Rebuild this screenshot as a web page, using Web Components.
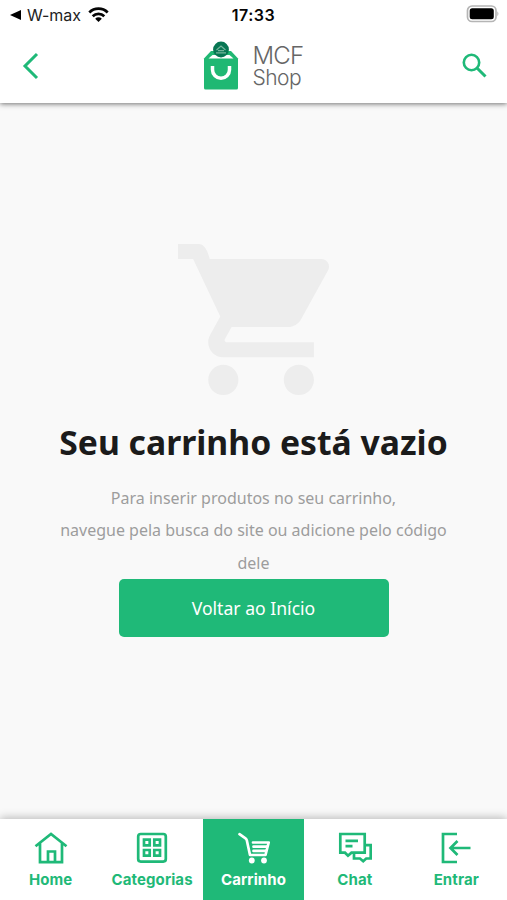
<!DOCTYPE html>
<html lang="pt-BR">
<head>
<meta charset="utf-8">
<title>MCF Shop</title>
<style>
    body {
        margin: 0;
        background: #f9f9f9;
        --shop-green: #1fb978;
        --shop-bg: #f9f9f9;
        --shop-title: #1b1b1b;
        --shop-muted: #9d9d9d;
    }
</style>
</head>
<body>
<shop-app>
    <status-bar slot="top" app="W-max" time="17:33"></status-bar>
    <shop-header slot="top"></shop-header>
    <empty-cart>
        <span slot="title">Seu carrinho está vazio</span>
        <span slot="text">Para inserir produtos no seu carrinho,<br>navegue pela busca do site ou adicione pelo código<br>dele</span>
        <span slot="action">Voltar ao Início</span>
    </empty-cart>
    <tab-bar slot="bottom">
        <tab-item icon="home">Home</tab-item>
        <tab-item icon="grid">Categorias</tab-item>
        <tab-item icon="cart" active>Carrinho</tab-item>
        <tab-item icon="chat">Chat</tab-item>
        <tab-item icon="enter">Entrar</tab-item>
    </tab-bar>
</shop-app>

<script>
const ICONS = {
    home: '<path d="M1.500 14.200 17 2l15.500 12.200M6 11v19.200h22V11M14 30V19.500h7V30"/>',
    grid: '<rect x="3.200" y="2" width="27.600" height="27.600" rx="2.500"/><path d="M9 7.600h5.700v5.700H9zM19.300 7.600H25v5.700h-5.700zM9 18h5.700v5.700H9zM19.300 18H25v5.700h-5.700z"/>',
    cart: '<path d="M3.500 2.200 9.500 6.300q1 .7 1.300 2L14 23h15.500l3.200-12.500H17M17.500 14.700h13M17.500 18.900h12" stroke-linecap="round" stroke-linejoin="round"/><circle cx="15.800" cy="28.500" r="2.900" fill="currentColor" stroke="none"/><circle cx="28" cy="28.500" r="2.900" fill="currentColor" stroke="none"/>',
    chat: '<path d="M2.300 2h24.400v18.700H13.500l-3.500 3-3-3H2.300zM7.500 8.800H20M7.500 14.200h7M27 13.200h5.700v13.300h-4.500l-3 2.700-3.200-2.700h-6V21"/>',
    enter: '<path d="M18 2H4v28h14M31.500 16H12M18.500 9l-7 7 7 7"/>'
};

class ShopApp extends HTMLElement {
    constructor() {
        super();
        this.attachShadow({ mode: 'open' }).innerHTML = `
            <style>
                :host {
                    display: flex;
                    flex-direction: column;
                    height: 900px;
                    background: var(--shop-bg);
                    overflow: hidden;
                    font-family: "Noto Sans", "Open Sans", sans-serif;
                }
                main { flex: 1; display: flex; flex-direction: column; }
            </style>
            <slot name="top"></slot>
            <main><slot></slot></main>
            <slot name="bottom"></slot>
        `;
    }
}

class StatusBar extends HTMLElement {
    connectedCallback() {
        this.attachShadow({ mode: 'open' }).innerHTML = `
            <style>
                :host {
                    display: grid;
                    grid-template-columns: 1fr auto 1fr;
                    align-items: center;
                    height: 30px;
                    box-sizing: border-box;
                    padding: 0 8px 0 10px;
                    background: #fff;
                    color: #050505;
                    font: 16px/30px Inter, sans-serif;
                    z-index: 1;
                }
                .back { display: flex; align-items: center; }
                .app { margin: 0 7px 0 6px; color: #222; }
                .time {
                    font-weight: 600;
                    letter-spacing: 0.5px;
                    margin-right: 2px;
                }
                .battery { justify-self: end; margin-top: -2px; }
                svg { display: block; }
            </style>
            <div class="back">
                <svg width="11" height="12" viewBox="0 0 11 12"><path d="M0 6 11 1v10z"/></svg>
                <span class="app">${this.getAttribute('app')}</span>
                <svg width="21" height="16" viewBox="0 0 21 16">
                    <path d="M1.300 5.500a13 13 0 0 1 18.400 0M4.700 9.300a8.200 8.200 0 0 1 11.600 0" fill="none" stroke="currentColor" stroke-width="2.700"/>
                    <path d="M10.500 15 7.200 11.700a4.700 4.700 0 0 1 6.600 0z"/>
                </svg>
            </div>
            <span class="time">${this.getAttribute('time')}</span>
            <svg class="battery" width="33" height="18" viewBox="0 0 33 18">
                <rect x="1.500" y="1" width="28.500" height="15.500" rx="4.500" fill="#fff" stroke="#b5b5b5" stroke-width="1.700"/>
                <rect x="3.700" y="3.200" width="24.100" height="11.100" rx="2.500"/>
                <path d="M31.300 6.300q2.300 2.500 0 5z" fill="#b5b5b5"/>
            </svg>
        `;
    }
}

class ShopHeader extends HTMLElement {
    constructor() {
        super();
        this.attachShadow({ mode: 'open' }).innerHTML = `
            <style>
                :host {
                    display: grid;
                    grid-template-columns: 1fr auto 1fr;
                    align-items: center;
                    height: 73px;
                    box-sizing: border-box;
                    padding: 0 20px 2px;
                    background: #fff;
                    box-shadow: 0 1px 5px rgba(0, 0, 0, 0.55);
                    color: var(--shop-green);
                }
                svg { display: block; }
                .search { justify-self: end; }
                .brand { display: flex; align-items: center; gap: 13px; }
                .name {
                    padding-top: 2px;
                    color: #666;
                    font: 300 24px/22px Inter, sans-serif;
                    letter-spacing: -0.7px;
                }
                .name span { display: block; }
                .shop { font-size: 21px; letter-spacing: -0.5px; }
            </style>
            <svg width="20" height="28" viewBox="0 0 20 28"><path d="M17 2 5 14l12 12" fill="none" stroke="currentColor" stroke-width="3"/></svg>
            <div class="brand">
                <svg width="36" height="50" viewBox="0 0 36 50">
                    <path d="M8 10h20l7 7.500V47q0 1.500-1.500 1.500h-31Q1 48.500 1 47V17.500z" fill="#20b873"/>
                    <path d="M5.500 17.500 9.500 14h17l4 3.500z" fill="#fff"/>
                    <path d="M9.500 25v3.800a8.500 8.500 0 0 0 17 0V25" fill="none" stroke="#fff" stroke-width="3.500"/>
                    <circle cx="18" cy="8.500" r="7.900" fill="#087653"/>
                    <path d="M13.500 9 18 5l4.500 4M13 11.800h10M15 9.600h6" fill="none" stroke="#75b59c" stroke-width="1.200"/>
                </svg>
                <div class="name"><span>MCF</span><span class="shop">Shop</span></div>
            </div>
            <svg class="search" width="26" height="26" viewBox="0 0 26 26" fill="none" stroke="currentColor">
                <circle cx="10.500" cy="9.500" r="7.700" stroke-width="2.600"/>
                <path d="m16 15 8.500 8.500" stroke-width="3"/>
            </svg>
        `;
    }
}

class EmptyCart extends HTMLElement {
    constructor() {
        super();
        this.attachShadow({ mode: 'open' }).innerHTML = `
            <style>
                :host {
                    display: flex;
                    flex-direction: column;
                    align-items: center;
                    padding-top: 141px;
                    text-align: center;
                }
                svg { display: block; fill: #ededed; }
                h1 {
                    margin: 23px 0 0;
                    color: var(--shop-title);
                    font-size: 33.700px;
                    line-height: 48px;
                    font-weight: 700;
                    white-space: nowrap;
                }
                p {
                    margin: 16px 0 0;
                    color: var(--shop-muted);
                    font-size: 16px;
                    line-height: 32.300px;
                    white-space: nowrap;
                }
                button {
                    width: 270px;
                    height: 58px;
                    border: 0;
                    border-radius: 5px;
                    padding: 0;
                    background: var(--shop-green);
                    color: #fff;
                    font: 17.600px/58px "Noto Sans", "Open Sans", sans-serif;
                }
            </style>
            <svg width="151" height="151" viewBox="1 2 20 20">
                <path d="M7 18c-1.100 0-1.990.9-1.990 2S5.900 22 7 22s2-.9 2-2-.9-2-2-2zM1 2v2h2l3.600 7.590-1.350 2.450c-.16.28-.25.61-.25.96 0 1.100.9 2 2 2h12v-2H7.420c-.14 0-.25-.11-.25-.25l.03-.12.9-1.630h7.450c.75 0 1.410-.41 1.750-1.030l3.580-6.490A1 1 0 0 0 20 4H5.210Q4.700 2 3.800 2H1zm16 16c-1.100 0-1.990.9-1.990 2s.89 2 1.990 2 2-.9 2-2-.9-2-2-2z"/>
            </svg>
            <h1><slot name="title"></slot></h1>
            <p><slot name="text"></slot></p>
            <button type="button"><slot name="action"></slot></button>
        `;
    }
}

class TabBar extends HTMLElement {
    constructor() {
        super();
        this.attachShadow({ mode: 'open' }).innerHTML = `
            <style>
                :host {
                    display: grid;
                    grid-template-columns: repeat(5, 1fr);
                    height: 81px;
                    background: #fff;
                    box-shadow: 0 -1px 9px rgba(0, 0, 0, 0.28);
                }
            </style>
            <slot></slot>
        `;
    }
}

class TabItem extends HTMLElement {
    connectedCallback() {
        this.attachShadow({ mode: 'open' }).innerHTML = `
            <style>
                :host {
                    display: flex;
                    flex-direction: column;
                    align-items: center;
                    padding-top: 13px;
                    color: var(--shop-green);
                    font: 700 15px/20px Inter, sans-serif;
                    letter-spacing: 0.1px;
                }
                :host([active]) {
                    background: var(--shop-green);
                    color: #fff;
                }
                svg {
                    display: block;
                    fill: none;
                    stroke: currentColor;
                    stroke-width: 2.700;
                    margin-bottom: 6px;
                }
            </style>
            <svg width="34" height="32" viewBox="0 0 34 32">${ICONS[this.getAttribute('icon')]}</svg>
            <slot></slot>
        `;
    }
}

customElements.define('shop-app', ShopApp);
customElements.define('status-bar', StatusBar);
customElements.define('shop-header', ShopHeader);
customElements.define('empty-cart', EmptyCart);
customElements.define('tab-bar', TabBar);
customElements.define('tab-item', TabItem);
</script>
</body>
</html>
